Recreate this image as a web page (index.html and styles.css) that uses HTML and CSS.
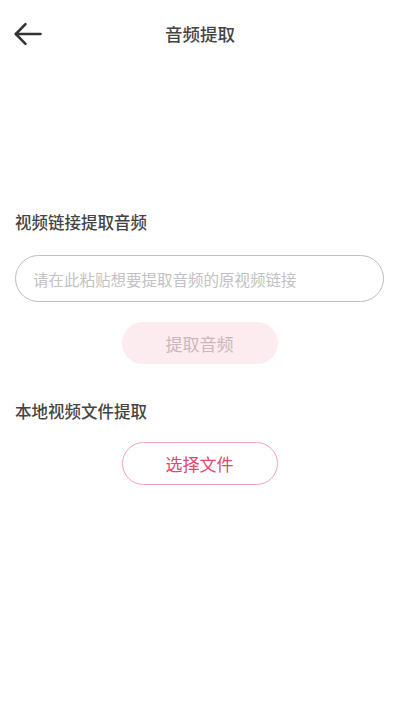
FILE: index.html
```html
<!DOCTYPE html>
<html lang="zh-CN">
<head>
<meta charset="utf-8">
<title>音频提取</title>
<link rel="stylesheet" href="styles.css">
</head>
<body>
<div class="page">
  <header class="header">
    <div class="back">
      <svg width="28" height="24" viewBox="0 0 28 24" fill="none" stroke="#333" stroke-width="2.5" stroke-linecap="round" stroke-linejoin="round">
        <path d="M1.8 12H26.5"/>
        <path d="M11.5 2.2L1.8 12L11.5 21.8"/>
      </svg>
    </div>
    <h1 class="title">音频提取</h1>
    <div></div>
  </header>
  <main class="main">
    <h2 class="section-title first">视频链接提取音频</h2>
    <div class="input-box">
      <input class="url-input" type="text" placeholder="请在此粘贴想要提取音频的原视频链接">
    </div>
    <div class="btn-row">
      <button class="btn btn-disabled">提取音频</button>
    </div>
    <h2 class="section-title second">本地视频文件提取</h2>
    <div class="btn-row">
      <button class="btn btn-outline">选择文件</button>
    </div>
  </main>
</div>
</body>
</html>
```

FILE: styles.css
```css
* {
  box-sizing: border-box;
}

html, body {
  margin: 0;
  padding: 0;
  background: #ffffff;
}

body {
  font-family: "Noto Sans CJK SC", "Noto Sans", sans-serif;
  color: #444;
}

.page {
  width: 400px;
  min-height: 710px;
}

.header {
  height: 68px;
  display: grid;
  grid-template-columns: 1fr auto 1fr;
  align-items: center;
}

.back {
  padding-left: 14px;
  display: flex;
  align-items: center;
}

.title {
  margin: 0;
  font-size: 17.5px;
  font-weight: 500;
  color: #444;
  line-height: 24px;
}

.main {
  padding: 0 16px 0 15px;
}

.section-title {
  margin: 0;
  font-size: 16.5px;
  font-weight: 500;
  line-height: 24px;
  color: #444;
}

.section-title.first {
  margin-top: 142px;
}

.section-title.second {
  margin-top: 35px;
}

.input-box {
  margin-top: 21px;
  height: 47px;
  border: 1.6px solid #bdbdbd;
  border-radius: 24px;
  display: flex;
  align-items: center;
  padding: 0 17px;
}

.url-input {
  border: none;
  outline: none;
  width: 100%;
  font-family: inherit;
  font-size: 15.5px;
  color: #333;
  background: transparent;
  padding: 0;
}

.url-input::placeholder {
  color: #c2c2c2;
}

.btn-row {
  display: flex;
  justify-content: center;
  margin-top: 20px;
}

.section-title.second + .btn-row {
  margin-top: 19px;
}

.btn {
  width: 156px;
  height: 42px;
  border-radius: 22px;
  font-family: inherit;
  font-size: 17px;
  font-weight: 400;
  display: flex;
  align-items: center;
  justify-content: center;
  padding: 0;
}

.btn-disabled {
  background: #fdecef;
  border: none;
  color: #cbb6ba;
}

.btn-outline {
  height: 43px;
  background: #fff;
  border: 1.5px solid #f1a3b3;
  color: #e2486a;
}
```
